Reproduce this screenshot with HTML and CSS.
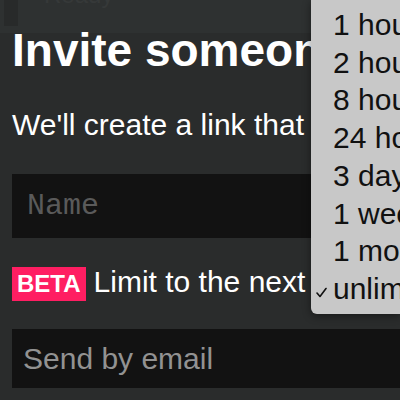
FILE: index.html
```html
<!DOCTYPE html>
<html>
<head>
<meta charset="utf-8">
<link rel="stylesheet" href="styles.css">
</head>
<body>
<div class="topbar">
  <div class="tb-box"></div>
  <span class="tb-text">Ready</span>
</div>
<main class="content">
  <h1 class="title">Invite someone</h1>
  <p class="lead">We'll create a link that will let someone join</p>
  <input class="name-input" type="text" placeholder="Name">
  <div class="limit-row">
    <span class="beta">BETA</span>
    <span class="limit-text">Limit to the next</span>
  </div>
  <input class="email-input" type="text" placeholder="Send by email">
</main>
<ul class="menu">
  <li class="item">1 hour</li>
  <li class="item">2 hours</li>
  <li class="item">8 hours</li>
  <li class="item">24 hours</li>
  <li class="item">3 days</li>
  <li class="item">1 week</li>
  <li class="item">1 month</li>
  <li class="item checked"><svg class="check" width="11" height="11" viewBox="0 0 11 11"><path d="M1 6 L4 9.5 L10 1.5" fill="none" stroke="#111" stroke-width="1.6" stroke-linecap="round" stroke-linejoin="round"/></svg>unlimited</li>
</ul>
</body>
</html>
```
FILE: styles.css
```css
html, body {
  margin: 0;
  padding: 0;
  width: 400px;
  height: 400px;
  overflow: hidden;
  background: #2a2c2c;
  font-family: "Liberation Sans", Arial, sans-serif;
}
.topbar {
  height: 33px;
  background: #2e3131;
  display: flex;
  align-items: flex-start;
  overflow: hidden;
}
.tb-box {
  width: 14px;
  height: 26px;
  margin-left: 4px;
  background: #282a2a;
}
.tb-text {
  margin-left: 26px;
  margin-top: -17px;
  font-size: 24px;
  line-height: 24px;
  color: #363939;
}
.content {
  padding-left: 12px;
  white-space: nowrap;
}
.title {
  margin: 0;
  font-size: 46px;
  line-height: 34px;
  font-weight: bold;
  color: #ffffff;
}
.lead {
  margin: 41px 0 0;
  font-size: 30px;
  line-height: 34px;
  color: #ffffff;
}
.name-input {
  display: block;
  box-sizing: border-box;
  margin: 32px 0 0;
  width: 420px;
  height: 64px;
  padding: 0 15px;
  border: none;
  outline: none;
  background: #121212;
  color: #ddd;
  font-family: "Liberation Mono", "Courier New", monospace;
  font-size: 30px;
}
.name-input::placeholder {
  color: #5a5a5a;
}
.limit-row {
  margin-top: 27px;
  display: flex;
  align-items: baseline;
}
.beta {
  display: inline-block;
  background: #ff1e62;
  color: #ffffff;
  font-weight: bold;
  font-size: 24px;
  line-height: 34px;
  padding: 0 5px;
  margin-right: 8px;
}
.limit-text {
  font-size: 30px;
  line-height: 34px;
  color: #ffffff;
}
.email-input {
  display: block;
  box-sizing: border-box;
  margin: 28px 0 0;
  width: 420px;
  height: 59px;
  padding: 0 11px;
  border: none;
  outline: none;
  background: #121212;
  color: #ddd;
  font-family: "Liberation Sans", Arial, sans-serif;
  font-size: 30px;
}
.email-input::placeholder {
  color: #929292;
}
.menu {
  position: absolute;
  top: 0;
  left: 311px;
  width: 89px;
  margin: 0;
  padding: 6px 0 6px;
  list-style: none;
  background: #c8c8c8;
  border-bottom-left-radius: 6px;
  box-shadow: 0 2px 8px rgba(0, 0, 0, 0.45);
  overflow: hidden;
  white-space: nowrap;
}
.item {
  position: relative;
  padding-left: 22px;
  font-size: 30px;
  line-height: 37.7px;
  color: #111111;
}
.check {
  position: absolute;
  left: 5px;
  top: 17px;
}
```
